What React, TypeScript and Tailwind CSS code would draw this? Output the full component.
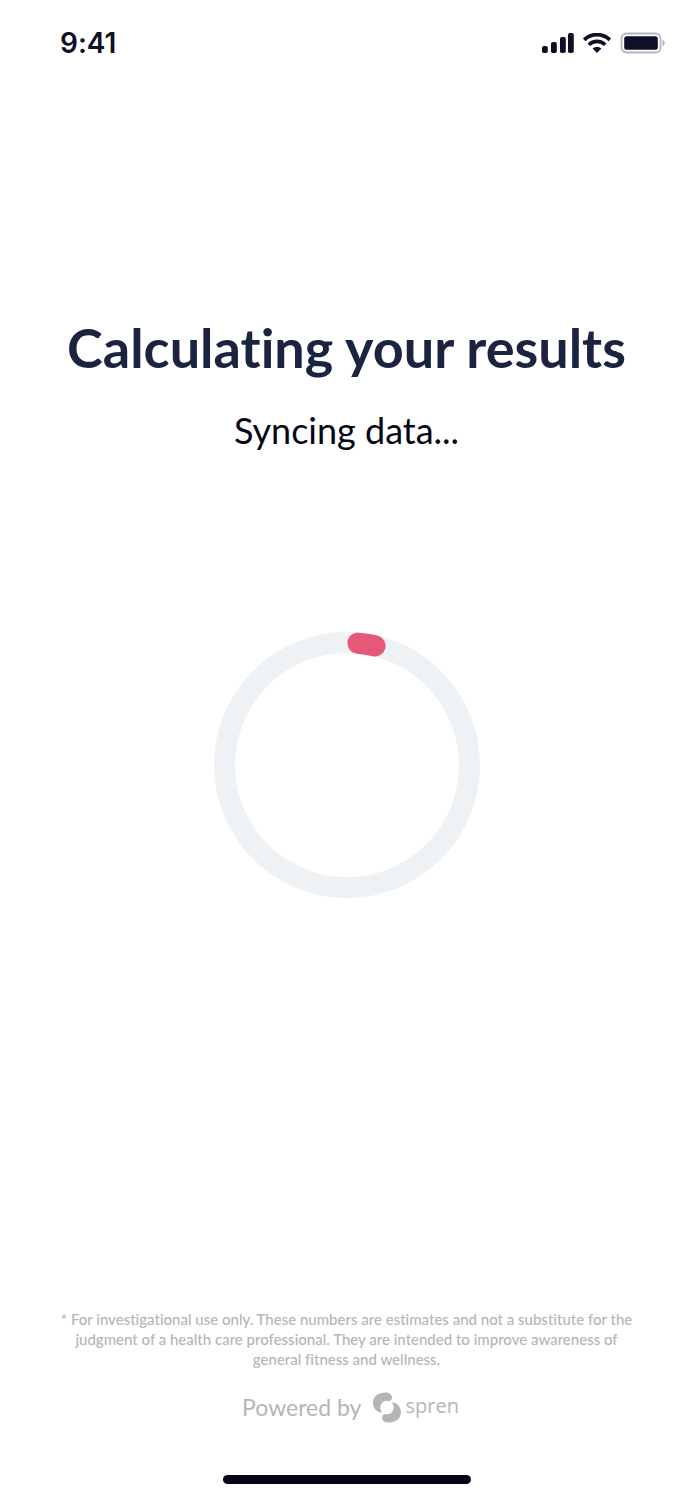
const signalBars = [
  { x: 0, height: 7 },
  { x: 9, height: 11 },
  { x: 18, height: 16 },
  { x: 26, height: 20 }
];

function StatusBar() {
  return (
    <header className="flex h-[86px] items-center justify-between pr-7 pl-15 text-[#0f0f28]">
      <time className="font-['Inter',sans-serif] text-[28px] leading-8 font-semibold">9:41</time>
      <div className="flex items-center gap-2">
        <svg className="h-5 w-8" viewBox="0 0 32 20" fill="currentColor" role="img" aria-label="Signal">
          {signalBars.map((bar) => (
            <rect key={bar.x} x={bar.x} y={20 - bar.height} width="5.8" height={bar.height} rx="1.8" />
          ))}
        </svg>
        <svg className="h-5 w-[30px]" viewBox="0 0 30 20" fill="none" stroke="currentColor" role="img" aria-label="Wi-Fi">
          <path d="M2.2 6.8 A18.5 18.5 0 0 1 27.8 6.8" strokeWidth="3.8" />
          <path d="M6.8 11.8 A11.5 11.5 0 0 1 23.2 11.8" strokeWidth="3.6" />
          <path d="M10.6 15.6 Q15 11.8 19.4 15.6 L15 20 Z" fill="currentColor" stroke="none" />
        </svg>
        <svg className="h-[22px] w-[45px]" viewBox="0 0 45 22" fill="none" role="img" aria-label="Battery">
          <rect x="1.5" y="1.5" width="39" height="19" rx="5" stroke="#b5b5c0" strokeWidth="1.8" />
          <rect x="4.2" y="4.2" width="33.6" height="13.6" rx="2.5" fill="currentColor" />
          <path d="M42.5 7.5 C45.5 9 45.5 13 42.5 14.5 Z" fill="#b5b5c0" />
        </svg>
      </div>
    </header>
  );
}

function ProgressRing() {
  return (
    <svg className="size-[266px]" viewBox="0 0 266 266" fill="none" role="img" aria-label="Progress">
      <circle cx="133" cy="133" r="122.5" stroke="#eef2f5" strokeWidth="21" />
      <path
        d="M144 11.2 A122.5 122.5 0 0 1 161 13.8"
        stroke="#e75776"
        strokeWidth="21.2"
        strokeLinecap="round"
      />
    </svg>
  );
}

function SprenLogo() {
  return (
    <span className="flex items-center gap-1">
      <svg className="h-[31px] w-7" viewBox="430 35 84 92" fill="currentColor" aria-hidden="true">
        <path d="M457 97 C441 95 430 83 430 67 C430 48 446 36 467 36 C479 36 487 42 487 51 C487 58 483 61.6 477 61.6 A20 20 0 0 0 457 94.2 Z" />
        <path d="M487 65 C503 67 514 79 514 95 C514 114 498 126 477 126 C465 126 457 120 457 111 C457 104 461 100.4 467 100.4 A20 20 0 0 0 487 67.8 Z" />
      </svg>
      <span className="pb-0.5 font-['Open_Sans',sans-serif] text-xl leading-7 font-medium">spren</span>
    </span>
  );
}

export default function App() {
  return (
    <div className="flex min-h-screen flex-col bg-white font-['Lato',sans-serif] [font-variant-ligatures:none]">
      <StatusBar />

      <main className="flex grow flex-col items-center pt-[230px] text-center">
        <h1 className="text-[54px] leading-16 font-bold text-[#1a2340]">Calculating your results</h1>
        <p className="mt-7 text-4xl leading-11 text-[#060617]">Syncing data...</p>
        <div className="mt-45">
          <ProgressRing />
        </div>
      </main>

      <footer className="flex flex-col items-center px-13 pb-4 text-center text-[#b5b5b5]">
        <p className="text-[15px] leading-5 font-medium">
          * For investigational use only. These numbers are estimates and not a substitute for the judgment of a health care
          professional. They are intended to improve awareness of general fitness and wellness.
        </p>
        <div className="mt-[22px] flex items-center gap-3 pl-2">
          <span className="text-[23px] leading-8">Powered by</span>
          <SprenLogo />
        </div>
        <div className="mt-13 h-[9px] w-62 rounded-full bg-[#060617]" />
      </footer>
    </div>
  );
}
